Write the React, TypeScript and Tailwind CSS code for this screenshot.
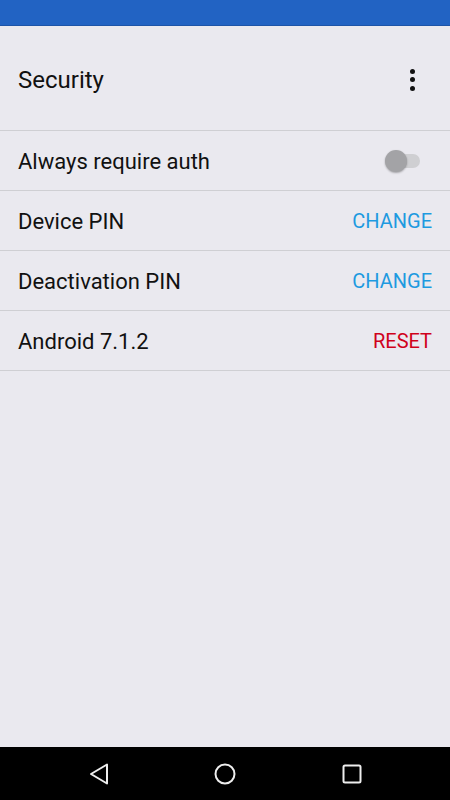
import React from "react";

function Row({ label, right }: { label: string; right: React.ReactNode }) {
  return (
    <div className="flex h-[60px] items-center justify-between border-b border-[#cfcfd3] pl-[18px] pr-[18px] pt-[1px]">
      <span className="text-[22px] text-[#111]">{label}</span>
      {right}
    </div>
  );
}

export default function App() {
  return (
    <div
      className="flex h-[800px] w-[450px] flex-col bg-[#eae9ef]"
      style={{ fontFamily: "Roboto, 'Noto Sans', sans-serif" }}
    >
      <div className="h-[26px] w-full bg-[#2263c3] border-b border-[#1d54a8]" />
      <div className="flex h-[105px] items-center justify-between border-b border-[#cfcfd3] pl-[18px] pr-[35px] pt-[3px]">
        <span className="text-[24px] text-[#111]">Security</span>
        <div className="flex flex-col gap-[3.5px]">
          <div className="h-[5px] w-[5px] rounded-full bg-[#111]" />
          <div className="h-[5px] w-[5px] rounded-full bg-[#111]" />
          <div className="h-[5px] w-[5px] rounded-full bg-[#111]" />
        </div>
      </div>
      <Row
        label="Always require auth"
        right={
          <div className="relative mr-[12px] h-[14px] w-[34px] rounded-full bg-[#cfcfd2]">
            <div className="absolute left-[-1px] top-[-4px] h-[22px] w-[22px] rounded-full bg-[#a3a3a6] shadow-[0_1px_2px_rgba(0,0,0,0.3)]" />
          </div>
        }
      />
      <Row label="Device PIN" right={<span className="text-[20px] text-[#1e9ae0]">CHANGE</span>} />
      <Row label="Deactivation PIN" right={<span className="text-[20px] text-[#1e9ae0]">CHANGE</span>} />
      <Row label="Android 7.1.2" right={<span className="text-[20px] text-[#d0021b]">RESET</span>} />
      <div className="flex-1" />
      <div className="flex h-[53px] items-center justify-center gap-[99px] bg-black">
        <svg width="28" height="28" viewBox="0 0 28 28">
          <path d="M23 4.5 L23 23.5 L7 14 Z" fill="none" stroke="#eee" strokeWidth="2" strokeLinejoin="round" />
        </svg>
        <svg width="28" height="28" viewBox="0 0 28 28">
          <circle cx="14" cy="14" r="9.5" fill="none" stroke="#eee" strokeWidth="2" />
        </svg>
        <svg width="28" height="28" viewBox="0 0 28 28">
          <rect x="5.5" y="5.5" width="17" height="17" rx="1.5" fill="none" stroke="#eee" strokeWidth="2" />
        </svg>
      </div>
    </div>
  );
}
